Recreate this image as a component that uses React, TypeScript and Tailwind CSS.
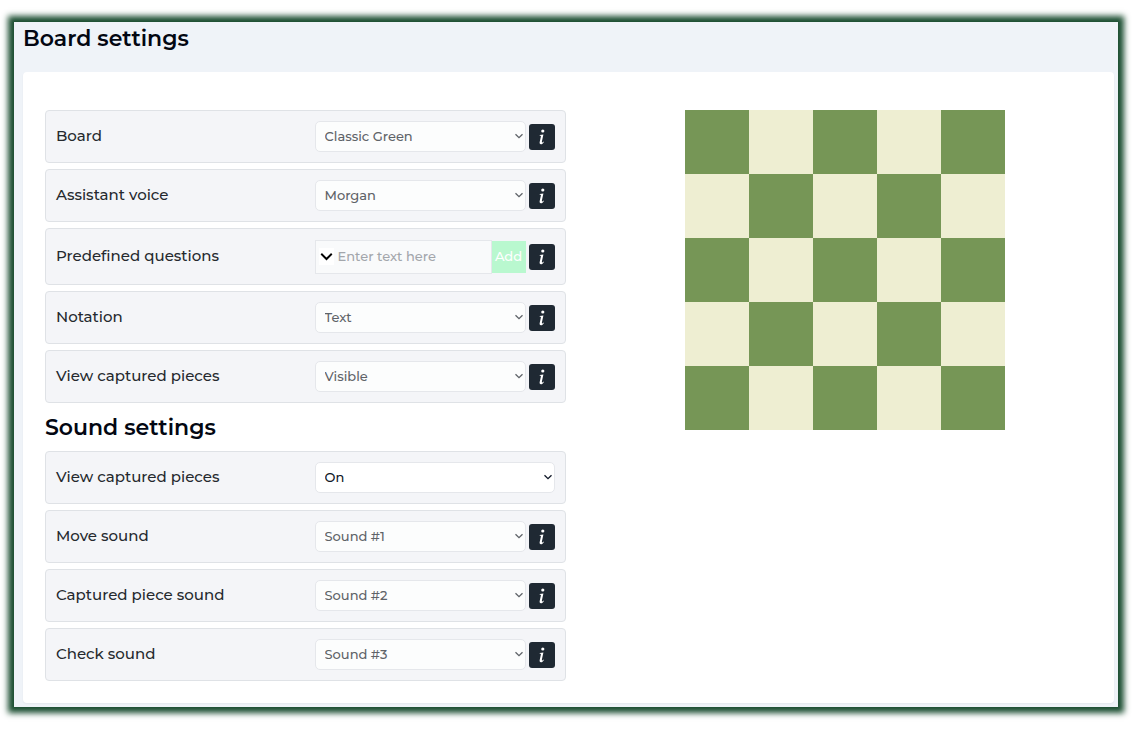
import type { ReactNode } from "react";

type Option = { id: string; label: string; value: string; info?: boolean };

const boardSettings: Option[] = [
  { id: "board", label: "Board", value: "Classic Green", info: true },
  { id: "voice", label: "Assistant voice", value: "Morgan", info: true },
];

const displaySettings: Option[] = [
  { id: "notation", label: "Notation", value: "Text", info: true },
  { id: "captured", label: "View captured pieces", value: "Visible", info: true },
];

const soundSettings: Option[] = [
  { id: "sound-captured", label: "View captured pieces", value: "On" },
  { id: "sound-move", label: "Move sound", value: "Sound #1", info: true },
  { id: "sound-piece", label: "Captured piece sound", value: "Sound #2", info: true },
  { id: "sound-check", label: "Check sound", value: "Sound #3", info: true },
];

function Chevron({ className }: { className: string }) {
  return (
    <svg viewBox="0 0 10 10" className={className} fill="none" stroke="currentColor" aria-hidden="true">
      <path d="M1.5 3.2 5 6.7l3.5-3.5" strokeWidth="1.3" />
    </svg>
  );
}

function InfoButton({ label }: { label: string }) {
  return (
    <button
      type="button"
      aria-label={`About ${label}`}
      className="flex size-[26px] shrink-0 items-center justify-center rounded-[3px] bg-[#1f2933] text-white"
    >
      <svg viewBox="0 0 8 16" className="h-4 w-2" fill="currentColor" aria-hidden="true">
        <circle cx="4.8" cy="2" r="1.6" />
        <path d="M1.7 6.1 5.4 5.4 3.9 12.6c-.1.6 0 .8.3.8.4 0 .8-.3 1.3-.9l.4.4C5 14.4 4 15.2 2.9 15.2c-1.1 0-1.5-.8-1.2-2.1l1.2-5.7c.1-.5 0-.6-.4-.7l-.9-.1z" />
      </svg>
    </button>
  );
}

function Row({ id, label, tall, children }: { id: string; label: string; tall?: boolean; children: ReactNode }) {
  return (
    <div
      className={`flex items-center justify-between rounded border border-[#dfe2e6] bg-[#f4f5f8] px-[10px] ${tall ? "h-[57px]" : "h-[53px]"}`}
    >
      <label htmlFor={id} className="text-[15px] font-medium text-[#25292e]">
        {label}
      </label>
      <div className="flex w-60 shrink-0 items-center gap-[3px]">{children}</div>
    </div>
  );
}

function SelectRow({ id, label, value, info }: Option) {
  return (
    <Row id={id} label={label}>
      <div className={`relative min-w-0 flex-1 ${info ? "text-[#5f6368]" : "text-gray-900"}`}>
        <select
          id={id}
          defaultValue={value}
          className={`block h-[31px] w-full appearance-none rounded-[5px] border border-gray-200 pr-6 pl-[9px] text-[13px] font-medium ${info ? "bg-[#fcfdfd]" : "bg-white"}`}
        >
          <option>{value}</option>
        </select>
        <Chevron className="pointer-events-none absolute top-[10px] right-[2px] size-[10px]" />
      </div>
      {info && <InfoButton label={label} />}
    </Row>
  );
}

function ChessBoard() {
  return (
    <div className="grid size-80 shrink-0 grid-cols-5" role="img" aria-label="Board preview">
      {Array.from({ length: 25 }, (_, i) => (
        <div key={i} className={i % 2 === 0 ? "bg-[#769656]" : "bg-[#eeeed2]"} />
      ))}
    </div>
  );
}

export default function App() {
  return (
    <div className="bg-white px-[14px] pt-[22px] pb-[23px] font-['Montserrat','Inter',sans-serif]">
      <main className="bg-[#eff3f8] pr-1 pb-1 pl-[9px] shadow-[0_0_6px_6px_#1a4d30]">
        <h1 className="flex h-[50px] items-start text-[22px] leading-[34px] font-semibold text-gray-950">
          Board settings
        </h1>
        <div className="flex rounded bg-white px-[22px] pt-[38px] pb-[22px] shadow-xs">
          <section className="flex w-1/2 flex-col gap-[6px] pr-[3px]">
            {boardSettings.map((s) => (
              <SelectRow key={s.id} {...s} />
            ))}
            <Row id="question" label="Predefined questions" tall>
              <div className="flex min-w-0 flex-1 items-center">
                <div className="flex h-[34px] min-w-0 flex-1 items-center border border-gray-200 bg-gray-50">
                  <button type="button" aria-label="Show questions" className="ml-[3px] bg-white py-px">
                    <Chevron className="size-[15px]" />
                  </button>
                  <input
                    id="question"
                    type="text"
                    placeholder="Enter text here"
                    className="w-full min-w-0 bg-transparent pl-1 text-[13px] font-medium outline-none placeholder:text-[#a3a6ab]"
                  />
                </div>
                <button type="button" className="h-8 w-[34px] shrink-0 bg-green-200 text-[13px] font-medium text-white">
                  Add
                </button>
              </div>
              <InfoButton label="Predefined questions" />
            </Row>
            {displaySettings.map((s) => (
              <SelectRow key={s.id} {...s} />
            ))}
            <h2 className="-my-[6px] flex h-12 items-center text-[22px] font-semibold text-gray-950">Sound settings</h2>
            {soundSettings.map((s) => (
              <SelectRow key={s.id} {...s} />
            ))}
          </section>
          <section className="flex flex-1 justify-center pl-[30px]">
            <ChessBoard />
          </section>
        </div>
      </main>
    </div>
  );
}
